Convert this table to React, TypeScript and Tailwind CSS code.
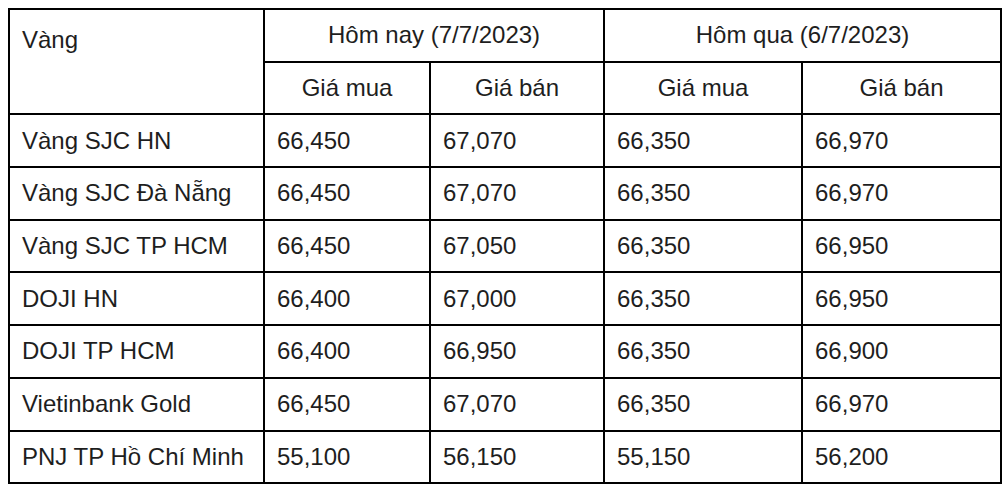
const rows: [string, string, string, string, string][] = [
  ["Vàng SJC HN", "66,450", "67,070", "66,350", "66,970"],
  ["Vàng SJC Đà Nẵng", "66,450", "67,070", "66,350", "66,970"],
  ["Vàng SJC TP HCM", "66,450", "67,050", "66,350", "66,950"],
  ["DOJI HN", "66,400", "67,000", "66,350", "66,950"],
  ["DOJI TP HCM", "66,400", "66,950", "66,350", "66,900"],
  ["Vietinbank Gold", "66,450", "67,070", "66,350", "66,970"],
  ["PNJ TP Hồ Chí Minh", "55,100", "56,150", "55,150", "56,200"],
];

const cell = "border-2 border-black px-[12px] h-[52.7px] align-middle";

export default function App() {
  return (
    <div className="bg-white w-[1006px] h-[493px] pt-[8px] pl-[8px] font-['Liberation_Sans',Arial,sans-serif] text-[24px] text-[#1e1e1e]">
      <table className="border-collapse table-fixed w-[992px]">
        <colgroup>
          <col className="w-[255px]" />
          <col className="w-[166px]" />
          <col className="w-[174px]" />
          <col className="w-[198px]" />
          <col className="w-[199px]" />
        </colgroup>
        <thead>
          <tr>
            <th rowSpan={2} className="border-2 border-black px-[12px] pt-[12px] align-top text-left font-normal">
              Vàng
            </th>
            <th colSpan={2} className={`${cell} text-center font-normal`}>
              Hôm nay (7/7/2023)
            </th>
            <th colSpan={2} className={`${cell} text-center font-normal`}>
              Hôm qua (6/7/2023)
            </th>
          </tr>
          <tr>
            {["Giá mua", "Giá bán", "Giá mua", "Giá bán"].map((h, i) => (
              <th key={i} className={`${cell} text-center font-normal`}>
                {h}
              </th>
            ))}
          </tr>
        </thead>
        <tbody>
          {rows.map((r) => (
            <tr key={r[0]}>
              {r.map((v, i) => (
                <td key={i} className={`${cell} text-left whitespace-nowrap`}>
                  {v}
                </td>
              ))}
            </tr>
          ))}
        </tbody>
      </table>
    </div>
  );
}
